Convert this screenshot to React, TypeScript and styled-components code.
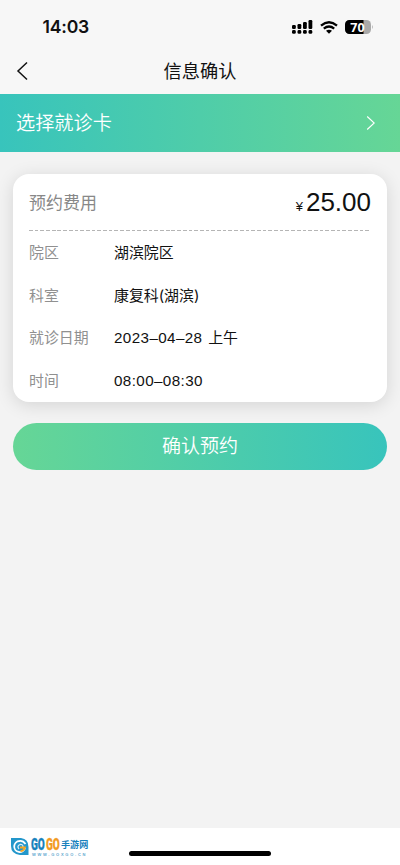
import React from "react";
import styled, { createGlobalStyle } from "styled-components";

const Global = createGlobalStyle`
  * { box-sizing: border-box; }
  body { margin: 0; background: #f3f3f3; font-family: Inter, "Noto Sans CJK SC", sans-serif; color: #111; }
`;

const Screen = styled.main`
  display: flex;
  flex-direction: column;
  width: 400px;
  height: 865px;
  overflow: hidden;
`;

const StatusBar = styled.div`
  display: flex;
  align-items: center;
  justify-content: space-between;
  height: 48px;
  padding: 6px 27px 0 42.5px;
  background: #f7f7f7;
`;

const Clock = styled.span`
  padding-bottom: 1px;
  font-size: 17.6px;
  font-weight: 600;
  letter-spacing: -0.2px;
`;

const StatusIcons = styled.div`
  display: flex;
  align-items: center;
  gap: 7px;
`;

const Header = styled.header`
  display: grid;
  grid-template-columns: 60px 1fr 60px;
  align-items: center;
  height: 46px;
  background: #f7f7f7;
`;

const BackButton = styled.button`
  display: flex;
  padding: 0 0 0 16px;
  border: 0;
  background: none;
`;

const Title = styled.h1`
  margin: 0;
  padding-bottom: 1px;
  text-align: center;
  font-size: 18.2px;
  line-height: 26px;
  font-weight: 400;
`;

const CardPicker = styled.div`
  display: flex;
  align-items: center;
  justify-content: space-between;
  height: 58px;
  padding: 0 24px 0 16px;
  background: linear-gradient(90deg, #38c4bc, #66d696);
  color: #fff;
`;

const PickerLabel = styled.span`
  padding-bottom: 3px;
  font-size: 19.2px;
  font-weight: 350;
`;

const Panel = styled.section`
  height: 228px;
  margin: 22px 13px 0;
  padding: 0 16px;
  border-radius: 16px;
  background: #fff;
  box-shadow: 0 3px 18px rgba(0, 0, 0, 0.13);
`;

const FeeRow = styled.div`
  display: flex;
  align-items: center;
  justify-content: space-between;
  height: 56px;
  color: #888;
  font-size: 17px;
`;

const FeeLabel = styled.span`
  padding-bottom: 2px;
`;

const Price = styled.div`
  padding-top: 4px;
  color: #111;
  font: 400 26px/34px "Liberation Sans", sans-serif;
`;

const Currency = styled.span`
  margin-right: 3px;
  font-size: 13px;
`;

const Divider = styled.div`
  height: 1px;
  background: repeating-linear-gradient(90deg, #b5b5b5 0 3.7px, transparent 3.7px 5.7px);
`;

const Details = styled.dl`
  display: grid;
  grid-template-columns: 85px 1fr;
  grid-auto-rows: 42.6px;
  margin: 0;
  padding-top: 1px;
  font-size: 14.9px;
  line-height: 42px;
`;

const Label = styled.dt`
  color: #909090;
`;

const Value = styled.dd`
  margin: 0;
  color: #111;
`;

const Digits = styled.span`
  margin-right: 1.5px;
  font-family: "Liberation Sans", sans-serif;
  font-size: 15.2px;
  letter-spacing: 0.4px;
`;

const Confirm = styled.button`
  height: 47px;
  margin: 21px 13px 0;
  padding: 1px 0 0;
  border: 0;
  border-radius: 24px;
  background: linear-gradient(90deg, #66d696, #38c4bc);
  color: #fff;
  font: 350 19px/46px Inter, "Noto Sans CJK SC", sans-serif;
`;

const Footer = styled.footer`
  display: grid;
  grid-template-columns: 118px 142px 1fr;
  height: 37px;
  margin-top: auto;
  padding-left: 11px;
  background: #fff;
`;

const Brand = styled.div`
  display: flex;
  gap: 2px;
  padding-top: 9px;
`;

const BrandText = styled.div`
  width: 58px;
`;

const BrandName = styled.div`
  display: flex;
  height: 15px;
  align-items: center;
  white-space: nowrap;
  font: 700 9.1px/15px "Noto Sans CJK SC", sans-serif;
  color: #1781bd;
`;

const Go = styled.span<{ $color: string }>`
  width: 15px;
  color: ${(p) => p.$color};
  font: 900 16.5px/15px "Roboto", sans-serif;
  -webkit-text-stroke: 0.3px ${(p) => p.$color};
  transform: scaleX(0.61);
  transform-origin: left center;
`;

const BrandUrl = styled.div`
  padding-left: 1px;
  color: #5fa9cf;
  font: 700 4px/5px "Liberation Sans", sans-serif;
  letter-spacing: 1.75px;
  white-space: nowrap;
`;

const HomeIndicator = styled.div`
  height: 5px;
  margin-top: 23px;
  border-radius: 3px;
  background: #000;
`;

const BatteryText = styled.text`
  font: 700 12.5px "Open Sans", sans-serif;
  fill: #fff;
`;

const rows: { label: string; digits?: string; text?: string }[] = [
  { label: "院区", text: "湖滨院区" },
  { label: "科室", text: "康复科(湖滨)" },
  { label: "就诊日期", digits: "2023–04–28", text: " 上午" },
  { label: "时间", digits: "08:00–08:30" },
];

function Signal() {
  return (
    <svg width="21" height="14" viewBox="0 0 21 14">
      {[5, 4, 2, 0].map((top, i) => (
        <g key={i}>
          <rect x={i * 5.5} y={top} width="3.8" height={9 - top} rx="1.2" />
          <rect x={i * 5.5} y="10" width="3.8" height="3.8" rx="1.4" />
        </g>
      ))}
    </svg>
  );
}

function Wifi() {
  return (
    <svg width="18" height="13" viewBox="0 0 18 13" fill="none" stroke="#000" strokeWidth="2.3">
      <path d="M1 4.6Q9-2.2 17 4.6" />
      <path d="M3.8 7.7Q9 3.4 14.2 7.7" />
      <path d="M9 12.8L6 9.8Q9 7.7 12 9.8Z" fill="#000" stroke="none" />
    </svg>
  );
}

function Battery() {
  return (
    <svg width="28" height="14" viewBox="0 0 28 14">
      <rect width="26" height="14" rx="4.5" fill="#aaa" />
      <path d="M4.5 0H18.5V14H4.5A4.5 4.5 0 0 1 0 9.5V4.5A4.5 4.5 0 0 1 4.5 0Z" />
      <path d="M27 5Q28.5 7 27 9Z" fill="#aaa" />
      <BatteryText x="12.5" y="11.5" textAnchor="middle">70</BatteryText>
    </svg>
  );
}

function BrandMark() {
  return (
    <svg width="18" height="19" viewBox="0 0 18 19" fill="none">
      <path d="M0 1H10Q17.5 2 17.5 10V18H9Q0 17 0 9Z" fill="#2397cb" />
      <path d="M14.5 7Q12 3.5 8.5 4A5.5 5.5 0 1 0 14 11" stroke="#fff" strokeWidth="1.8" />
      <path d="M8 12Q5.5 9 9 7.5Q12 7 12 10" stroke="#d9edf8" strokeWidth="1.3" />
      <path d="M9 10.5H14Q13 14 9.5 14" stroke="#f5a623" strokeWidth="1.8" />
    </svg>
  );
}

export default function App() {
  return (
    <Screen>
      <Global />
      <StatusBar>
        <Clock>14:03</Clock>
        <StatusIcons>
          <Signal />
          <Wifi />
          <Battery />
        </StatusIcons>
      </StatusBar>
      <Header>
        <BackButton aria-label="返回">
          <svg width="13" height="20" viewBox="0 0 13 20" fill="none" stroke="#111" strokeWidth="1.5">
            <path d="M11 1.5L2 10L11 18.5" />
          </svg>
        </BackButton>
        <Title>信息确认</Title>
      </Header>
      <CardPicker>
        <PickerLabel>选择就诊卡</PickerLabel>
        <svg width="10" height="16" viewBox="0 0 10 16" fill="none" stroke="#fff" strokeWidth="1.1">
          <path d="M1.2 1.5L8.2 8L1.2 14.5" />
        </svg>
      </CardPicker>
      <Panel>
        <FeeRow>
          <FeeLabel>预约费用</FeeLabel>
          <Price><Currency>¥</Currency>25.00</Price>
        </FeeRow>
        <Divider />
        <Details>
          {rows.map(({ label, digits, text }) => (
            <React.Fragment key={label}>
              <Label>{label}</Label>
              <Value>
                {digits && <Digits>{digits}</Digits>}
                {text}
              </Value>
            </React.Fragment>
          ))}
        </Details>
      </Panel>
      <Confirm>确认预约</Confirm>
      <Footer>
        <Brand>
          <BrandMark />
          <BrandText>
            <BrandName>
              <Go $color="#1781bd">GO</Go>
              <Go $color="#f29a1f">GO</Go>
              手游网
            </BrandName>
            <BrandUrl>WWW.GOXGO.CN</BrandUrl>
          </BrandText>
        </Brand>
        <HomeIndicator />
      </Footer>
    </Screen>
  );
}
